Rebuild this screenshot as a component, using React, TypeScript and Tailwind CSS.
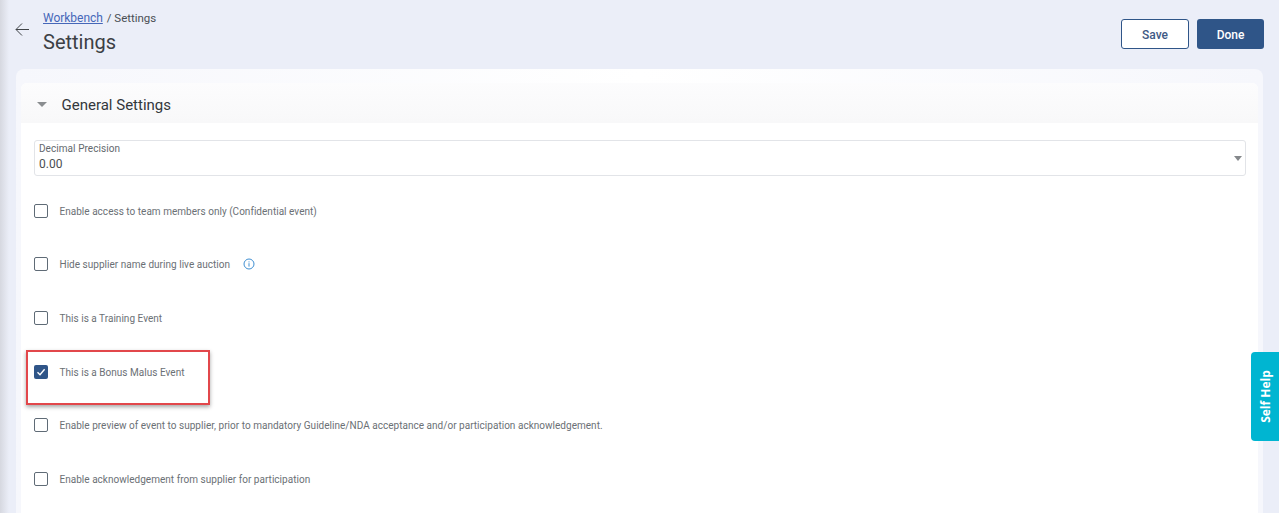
import React from "react";

const rows = [
  { label: "Enable access to team members only (Confidential event)" },
  { label: "Hide supplier name during live auction", info: true },
  { label: "This is a Training Event" },
  { label: "This is a Bonus Malus Event", checked: true, marked: true },
  { label: "Enable preview of event to supplier, prior to mandatory Guideline/NDA acceptance and/or participation acknowledgement." },
  { label: "Enable acknowledgement from supplier for participation" },
];

function Row({ label, checked, info, marked }: { label: string; checked?: boolean; info?: boolean; marked?: boolean }) {
  return (
    <div className="relative flex h-[53.6px] shrink-0 items-center">
      {checked ? (
        <span className="flex h-[14px] w-[14px] items-center justify-center rounded-[2px] bg-[#2f5588]">
          <svg width="10" height="10" viewBox="0 0 10 10" fill="none" stroke="#fff" strokeWidth="1.4">
            <path d="M1.5 5.3 L4 7.8 L8.6 2.3" />
          </svg>
        </span>
      ) : (
        <span className="h-[14px] w-[14px] rounded-[2px] border-[1.5px] border-[#5f6b76] bg-white" />
      )}
      <span className="ml-[11.5px] text-[10px] leading-[14px] tracking-[0.025px] text-[#6b7075] [transform:translateY(1.1px)]">{label}</span>
      {info && (
        <svg className="ml-[13px]" width="12" height="12" viewBox="0 0 12 12" fill="none" stroke="#3f8fd2" strokeWidth="1">
          <circle cx="6" cy="6" r="5" />
          <path d="M6 5.2 V8.6 M6 3.4 V4.4" />
        </svg>
      )}
      {marked && (
        <div className="absolute left-[-8px] top-[5px] h-[55px] w-[184px] border-[2.5px] border-[#e2474b] shadow-[0_2px_4px_rgba(0,0,0,0.35)]" />
      )}
    </div>
  );
}

export default function App() {
  return (
    <div className="relative h-[513px] w-[1279px] overflow-hidden bg-[#ebeef8] font-['Roboto',sans-serif]">
      <div className="absolute inset-y-0 left-0 w-[9px] bg-gradient-to-r from-[#d6d8e0] to-[#ebeef8]" />
      <header className="relative flex h-[69px] items-start justify-between pl-[15px] pr-[15px]">
        <div className="flex">
          <svg className="mt-[22px]" width="15" height="15" viewBox="0 0 15 15" fill="none" stroke="#3f4347" strokeWidth="1">
            <path d="M14 7.5 H1 M7 1.5 L1 7.5 L7 13.5" />
          </svg>
          <div className="ml-[13px] pt-[11px]">
            <div className="text-[12px] leading-[14px] tracking-[-0.03px] text-[#4a4f55]">
              <span className="text-[#4667b8] underline">Workbench</span>
              <span className="ml-[4px] text-[11.5px]">/ Settings</span>
            </div>
            <h1 className="mt-[4px] text-[20px] font-normal leading-[26px] text-[#3c4044]">Settings</h1>
          </div>
        </div>
        <div className="mt-[19px] flex gap-[8px]">
          <button className="h-[30px] w-[68px] rounded-[3px] border border-[#2f5588] bg-white pt-[1px] text-[12px] font-medium text-[#3f5a85]">Save</button>
          <button className="h-[30px] w-[67px] rounded-[3px] bg-[#2f5588] pt-[1px] text-[12px] font-medium text-white">Done</button>
        </div>
      </header>

      <main className="relative mx-[16px] h-[444px] rounded-t-[8px] bg-gradient-to-r from-[#f6f7fc] via-white to-[#f6f7fc] px-[5px] pt-[14px]">
        <div className="h-full rounded-t-[6px] bg-white">
          <div className="flex h-[40px] items-center rounded-t-[6px] bg-gradient-to-b from-[#fcfcfd] to-[#f8f8f9] pl-[16px] pt-[3px]">
            <span className="h-0 w-0 border-x-[5px] border-t-[5px] border-x-transparent border-t-[#8a8d90]" />
            <span className="ml-[14.5px] text-[15px] leading-[20px] text-[#33373b]">General Settings</span>
          </div>
          <div className="px-[13px] pt-[17px]">
            <div className="flex h-[36px] w-[1212px] items-center justify-between rounded-[3px] border border-[#e2e4e8] pl-[4px] pr-[3px]">
              <div className="-mt-[2px]">
                <div className="text-[10px] leading-[12px] tracking-[0.06px] text-[#63686d]">Decimal Precision</div>
                <div className="mt-[2px] text-[12px] leading-[14px] text-[#4a4e52]">0.00</div>
              </div>
              <span className="h-0 w-0 border-x-[4.5px] border-t-[5px] border-x-transparent border-t-[#85888b]" />
            </div>
            <div className="mt-[8px] flex flex-col">
              {rows.map((r) => (
                <Row key={r.label} {...r} />
              ))}
            </div>
          </div>
        </div>
      </main>

      <div className="absolute right-0 top-[352px] flex h-[89px] w-[28px] items-center justify-center rounded-l-[4px] bg-[#00b5d1]">
        <span className="ml-[2px] rotate-[-90deg] whitespace-nowrap pl-[1px] font-['Open_Sans',sans-serif] text-[12px] font-bold text-white">Self Help</span>
      </div>
    </div>
  );
}
